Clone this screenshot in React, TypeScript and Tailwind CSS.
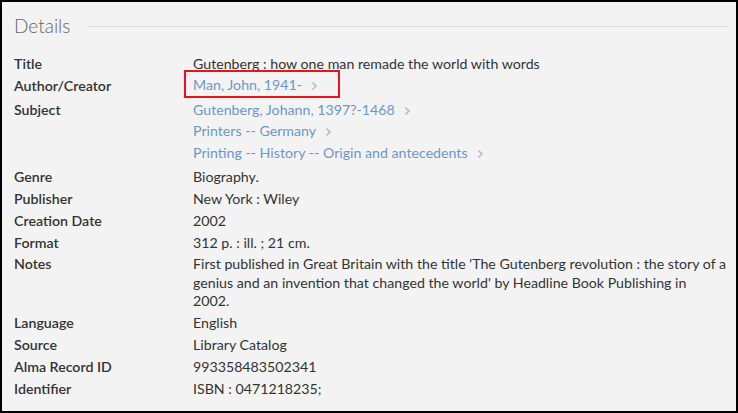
import React from "react";

const Chevron = () => (
  <svg width="7" height="10" viewBox="0 0 7 10" className="inline-block ml-[9px] align-[-1px]">
    <path d="M1.5 1.5 L5 5 L1.5 8.5" fill="none" stroke="#aabbd0" strokeWidth="1.5" />
  </svg>
);

const Link = ({ children }: { children: React.ReactNode }) => (
  <div className="py-[1.5px]">
    <span className="text-[#6b98c9]">{children}</span>
    <Chevron />
  </div>
);

const Row = ({ label, children }: { label: string; children: React.ReactNode }) => (
  <div className="grid grid-cols-[179px_1fr]">
    <div className="font-semibold text-[#333] py-[1.7px]">{label}</div>
    <div className="text-[#333] py-[1.7px]">{children}</div>
  </div>
);

export default function App() {
  return (
    <div
      className="relative w-[738px] h-[413px] border-2 border-black bg-[#f3f3f3] pl-3 pr-2 text-[14.2px] leading-[18.5px]"
      style={{ fontFamily: "Lato, 'Noto Sans', sans-serif" }}
    >
      <div className="h-[49px] pt-[12px]">
        <div className="flex items-center gap-[18px] h-[24px]">
          <div className="text-[19px] font-light text-[#666] leading-[24px]">Details</div>
          <div className="flex-1 h-px bg-[#dcdcdc]" />
        </div>
      </div>
      <div className="pt-[2px]">
        <Row label="Title">Gutenberg : how one man remade the world with words</Row>
        <div className="grid grid-cols-[179px_1fr] pb-[2.5px]">
          <div className="font-semibold text-[#333] py-[1.7px]">Author/Creator</div>
          <div>
            <Link>Man, John, 1941-</Link>
          </div>
        </div>
        <div className="grid grid-cols-[179px_1fr] pb-[2.5px]">
          <div className="font-semibold text-[#333] py-[1.7px]">Subject</div>
          <div>
            <Link>Gutenberg, Johann, 1397?-1468</Link>
            <Link>Printers -- Germany</Link>
            <Link>Printing -- History -- Origin and antecedents</Link>
          </div>
        </div>
        <Row label="Genre">Biography.</Row>
        <Row label="Publisher">New York : Wiley</Row>
        <Row label="Creation Date">2002</Row>
        <Row label="Format">312 p. : ill. ; 21 cm.</Row>
        <Row label="Notes">
          <div>
            First published in Great Britain with the title 'The Gutenberg revolution : the story of a
            <br />
            genius and an invention that changed the world' by Headline Book Publishing in
            <br />
            2002.
          </div>
        </Row>
        <Row label="Language">English</Row>
        <Row label="Source">Library Catalog</Row>
        <Row label="Alma Record ID">993358483502341</Row>
        <Row label="Identifier">ISBN : 0471218235;</Row>
      </div>
      <div className="absolute left-[182px] top-[68px] w-[156px] h-[28px] border-2 border-[#e8141b]" />
    </div>
  );
}
